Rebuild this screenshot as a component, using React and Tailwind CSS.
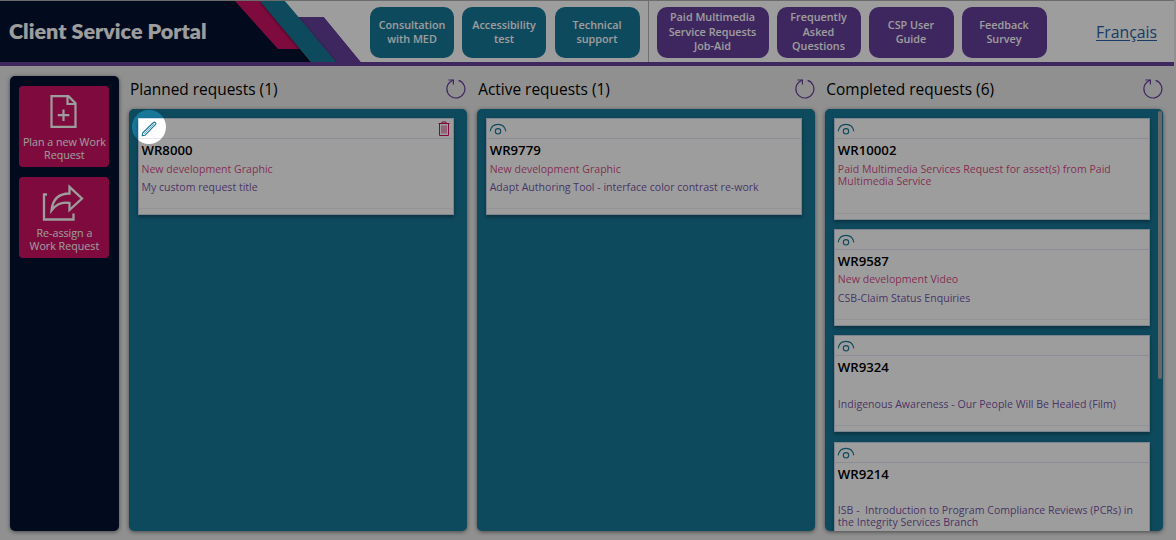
const nav = [
  { lines: ['Consultation', 'with MED'], box: 'w-[84px] bg-[#187899] ml-[8px]' },
  { lines: ['Accessibility', 'test'], box: 'w-[84px] bg-[#187899] ml-[8px]' },
  { lines: ['Technical', 'support'], box: 'w-[85px] bg-[#187899] ml-[8.5px]' },
  { lines: ['Paid Multimedia', 'Service Requests', 'Job-Aid'], box: 'w-[112px] bg-[#663e9a] ml-[8px]' },
  { lines: ['Frequently', 'Asked', 'Questions'], box: 'w-[84px] bg-[#663e9a] ml-[8px]' },
  { lines: ['CSP User', 'Guide'], box: 'w-[85px] bg-[#663e9a] ml-[8px]' },
  { lines: ['Feedback', 'Survey'], box: 'w-[85px] bg-[#663e9a] ml-[8px]' },
];

const columns = [
  {
    title: 'Planned requests (1)',
    cards: [{ id: 'WR8000', kind: 'New development Graphic', text: 'My custom request title', editable: true }],
  },
  {
    title: 'Active requests (1)',
    cards: [{ id: 'WR9779', kind: 'New development Graphic', text: 'Adapt Authoring Tool - interface color contrast re-work' }],
  },
  {
    title: 'Completed requests (6)',
    scroll: true,
    cards: [
      { id: 'WR10002', kind: 'Paid Multimedia Services Request for asset(s) from Paid\nMultimedia Service', text: '', tall: true },
      { id: 'WR9587', kind: 'New development Video', text: 'CSB-Claim Status Enquiries' },
      { id: 'WR9324', kind: '', text: 'Indigenous Awareness - Our People Will Be Healed (Film)' },
      { id: 'WR9214', kind: '', text: 'ISB -  Introduction to Program Compliance Reviews (PCRs) in\nthe Integrity Services Branch' },
    ],
  },
];

function Refresh() {
  return (
    <svg className="h-[20px] w-[20px] shrink-0" viewBox="0 0 20 20" fill="none" stroke="#663e9a" strokeWidth="1.2">
      <path d="M12.6 1.4A9 9 0 1 1 4.2 3L7.2 1" />
      <path d="M2.4 1H7.4V5.4" />
    </svg>
  );
}

function Eye() {
  return (
    <svg className="h-[12px] w-[18px]" viewBox="0 0 18 12" fill="none" stroke="#187899" strokeWidth="1.1">
      <path d="M1.2 8.3C2 3.8 5 1.4 9 1.4s7 2.4 7.8 6.9" />
      <circle cx="9" cy="8.3" r="2.7" />
    </svg>
  );
}

function Pencil() {
  return (
    <svg className="h-[16px] w-[16px]" viewBox="0 0 16 16" fill="none" stroke="#187899" strokeWidth="1.1" strokeLinejoin="round">
      <path d="M1.2 14.8l.4-2.8L12.5 1.5q1-.8 1.9.1t.1 1.8L4 14.3z" />
      <path d="M3 13L13 3.1" strokeWidth=".6" />
    </svg>
  );
}

function Trash() {
  return (
    <svg className="h-[15px] w-[12px]" viewBox="0 0 12 15" fill="none" stroke="#ce1365" strokeWidth="1" shapeRendering="geometricPrecision">
      <path d="M.5 2.5h11M4 2.3V1h4v1.3M1.5 2.5v12h9v-12" />
      <path d="M4 4.5v8M6 4.5v8M8 4.5v8" strokeWidth=".8" />
    </svg>
  );
}

function Card({ card }) {
  return (
    <div className={`flex w-[316px] shrink-0 flex-col bg-white shadow-[0_2px_4px_rgba(0,0,0,0.35)] outline outline-1 -outline-offset-1 outline-[#c9d9e8] ${card.tall ? 'h-[101.5px]' : 'h-[97px]'}`}>
      <div className="flex h-[21px] shrink-0 items-start justify-between border-b border-[#e3e6f1] pl-[3px] pr-[4px]">
        <div className={card.editable ? 'pt-[3px]' : '-ml-[0.5px] pt-[5px]'}>{card.editable ? <Pencil /> : <Eye />}</div>
        {card.editable && <div className="pt-[3px]"><Trash /></div>}
      </div>
      <div className="flex grow flex-col pl-[3.5px]">
        <div className="mt-[1px] h-[20px] text-[13.2px] leading-[20px] font-semibold text-black">{card.id}</div>
        <div className="mt-[2.5px] min-h-[12px] text-[10.57px] leading-[12.4px] whitespace-pre text-[#ce1365]/80">{card.kind}</div>
        <div className="mt-[5.8px] text-[10.57px] leading-[12.4px] whitespace-pre text-[#663e9a]/90">{card.text}</div>
      </div>
      <div className="h-[7px] shrink-0 border-t border-[#eceff6]" />
    </div>
  );
}

function Column({ column }) {
  return (
    <section className="flex w-[338px] shrink-0 flex-col">
      <div className="flex h-[33px] items-center justify-between pl-[1px]">
        <h2 className="mt-[-8px] text-[15.45px] leading-[24px] text-black">{column.title}</h2>
        <div className="mt-[-7px] mr-[0.5px]"><Refresh /></div>
      </div>
      <div className="relative flex h-[422px] flex-col gap-[9.4px] overflow-hidden rounded-[5px] bg-[#187899] pt-[9px] pl-[9px] shadow-[0_1px_4px_rgba(0,0,0,0.5)]">
        {column.cards.map((c) => <Card key={c.id} card={c} />)}
        {column.scroll && <div className="absolute top-[2px] right-[1px] h-[268px] w-[4px] rounded-full bg-[#a9a9b0]" />}
      </div>
    </section>
  );
}

function Action({ children, label }) {
  return (
    <button className="flex h-[81px] w-[90px] shrink-0 flex-col items-center rounded-[4px] bg-[#ce1365] text-white">
      <div className="flex h-[50px] items-end">{children}</div>
      <span className="block text-[10.7px] leading-[13px] whitespace-pre">{label}</span>
    </button>
  );
}

export default function App() {
  return (
    <div className="relative flex h-[540px] w-[1176px] flex-col overflow-hidden bg-[#eaeaea] font-['Open_Sans','Noto_Sans',sans-serif]">
      <header className="flex h-[66px] w-[1174px] shrink-0 border-t border-b-4 border-t-[#b0b0b0] border-b-[#663e9a] bg-white">
        <div className="relative h-[61px] w-[362px] shrink-0">
          <svg className="absolute inset-0 h-[61px] w-[362px]" viewBox="0 0 362 61">
            <defs>
              <filter id="soft" x="-20%" y="-20%" width="140%" height="140%">
                <feDropShadow dx="0" dy="1" stdDeviation="1.8" floodOpacity="0.6" />
              </filter>
              <clipPath id="shapes">
                <path d="M0 0H285L299 16H324L361 61H0z" />
              </clipPath>
            </defs>
            <g clipPath="url(#shapes)">
              <path d="M298 16h26l37 45h-50z" fill="#663e9a" />
              <path d="M0 0H261l50 61H0z" fill="#031230" />
              <path d="M235 0h30l42 48h-29z" fill="#ce1365" />
              <path d="M260 0h25l51 61h-25z" fill="#187899" filter="url(#soft)" />
            </g>
          </svg>
          <h1 className="relative pt-[17px] pl-[9px] font-['Lato',sans-serif] text-[21.55px] leading-[26px] font-extrabold whitespace-nowrap text-white">Client Service Portal</h1>
        </div>
        <nav className="flex pt-[6px]">
          {nav.map((n, i) => (
            <div key={n.lines[0]} className="flex">
              {i === 3 && <div className="-mt-[6px] ml-[8px] h-[61px] w-px bg-[#b5b5b5]" />}
              <a className={`flex h-[51px] flex-col items-center justify-center rounded-[10px] pb-[1px] text-[10.8px] leading-[14.5px] font-semibold whitespace-nowrap text-white ${n.box}`}>
                {n.lines.map((l) => <span key={l}>{l}</span>)}
              </a>
            </div>
          ))}
        </nav>
        <a className="mt-[19px] ml-auto mr-[17px] text-[15.8px] leading-[24px] text-[#2a62a8] underline underline-offset-2">Français</a>
      </header>

      <main className="flex gap-[10.2px] pt-[10px] pl-[10px]">
        <aside className="flex h-[455px] w-[108.8px] shrink-0 flex-col items-center gap-[9.5px] rounded-[5px] bg-[#031230] pt-[10px] shadow-[0_1px_4px_rgba(0,0,0,0.5)]">
          <Action label={'Plan a new Work\nRequest'}>
            <svg className="mr-[1px] mb-[8px] h-[33px] w-[27px]" viewBox="0 0 27 33" fill="none" stroke="white" strokeWidth="2.4">
              <path d="M1.5 1.2h17l7 7v23.6h-24z M17.5 1v8h8 M13.5 14.5v11.5M7.8 20.2h11.5" strokeWidth="2.2" />
            </svg>
          </Action>
          <Action label={'Re-assign a\nWork Request'}>
            <svg className="mr-[2px] mb-[6px] h-[37px] w-[42px]" viewBox="0 0 42 37" fill="none" stroke="white" strokeWidth="2.3">
              <path d="M5 10.5H2v25h29.5v-6" />
              <path d="M27.5 2.8L40 14.5 27.5 26v-7C18 17.5 13.5 21.5 9.5 26.5 10.5 16.5 16 9.5 27.5 9.5z" />
            </svg>
          </Action>
        </aside>
        {columns.map((c) => <Column key={c.title} column={c} />)}
      </main>

      <div className="pointer-events-none absolute top-[110px] left-[132px] h-[34px] w-[34px] rounded-full shadow-[0_0_0_1300px_rgba(0,0,0,0.385)]" />
    </div>
  );
}
